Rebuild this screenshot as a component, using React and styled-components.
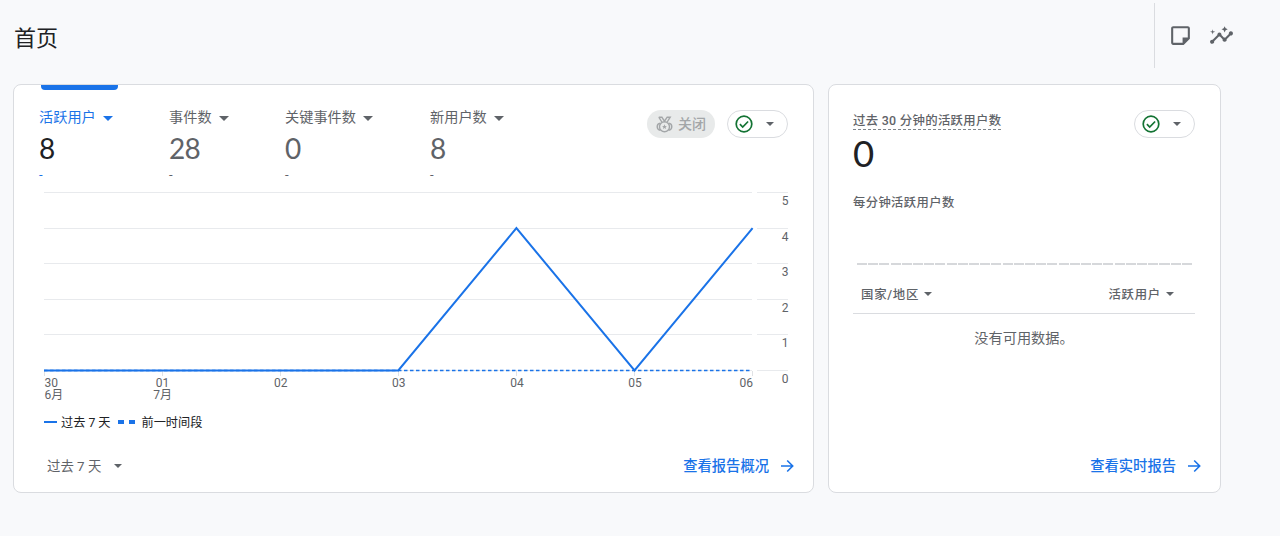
import React from "react";
import styled, { createGlobalStyle } from "styled-components";
import { MdInsights } from "react-icons/md";

const GlobalStyle = createGlobalStyle`
  * { box-sizing: border-box; }
  body {
    margin: 0;
    background: #f8f9fb;
    font-family: Roboto, "Noto Sans CJK SC", sans-serif;
    color: #5f6368;
  }
  svg { display: block; flex: none; }
`;

const Page = styled.div`
  width: 1280px;
  height: 536px;
  overflow: hidden;
  padding: 3px 59px 0 13px;
`;

const Header = styled.header`
  display: flex;
  height: 81px;
  justify-content: space-between;
`;

const Title = styled.h1`
  margin: 0;
  padding-left: 1px;
  font-size: 22px;
  font-weight: 400;
  line-height: 72px;
  color: #202124;
`;

const Tools = styled.div`
  display: flex;
  align-items: center;
  gap: 16px;
  width: 67px;
  height: 65px;
  padding-left: 12.5px;
  border-left: 1px solid #dadce0;
`;

const Cards = styled.main`
  display: flex;
  gap: 14px;
`;

const Card = styled.section`
  display: flex;
  flex-direction: column;
  flex: none;
  width: ${(p) => p.$width}px;
  height: 409px;
  padding: 0 25px 0 ${(p) => p.$left}px;
  background: #fff;
  border: 1px solid #dadce0;
  border-radius: 8px;
`;

const TabMark = styled.div`
  width: 77px;
  height: 5px;
  margin-left: 2px;
  background: #1a73e8;
  border-radius: 0 0 4px 4px;
`;

const Top = styled.div`
  display: flex;
  height: 95px;
  padding-top: 20px;
`;

const Metric = styled.div`
  width: ${(p) => p.$width}px;
  color: ${(p) => (p.$active ? "#1a73e8" : "#5f6368")};
`;

const MetricLabel = styled.div`
  display: flex;
  align-items: center;
  gap: 7px;
  height: 16px;
  font-size: 14.2px;
  line-height: 16px;
  white-space: nowrap;
`;

const LabelText = styled.span`
  padding-bottom: ${(p) => p.$lift || 2}px;
`;

const Caret = styled.i`
  border: ${(p) => p.$size || 5}px solid transparent;
  border-top-color: ${(p) => p.$color || "currentColor"};
  border-bottom: 0;
`;

const MetricValue = styled.div`
  font-family: Lato, sans-serif;
  font-size: 28px;
  line-height: 44px;
  letter-spacing: -0.7px;
  color: ${(p) => (p.$active ? "#202124" : "#5f6368")};
`;

const Delta = styled.div`
  padding-top: 1px;
  font-size: 13px;
  line-height: 8px;
`;

const Pills = styled.div`
  display: flex;
  gap: 12px;
  margin-left: auto;
`;

const OffPill = styled.div`
  display: flex;
  align-items: center;
  gap: 5px;
  width: 68px;
  height: 28px;
  padding-left: 9px;
  border-radius: 14px;
  background: #e8eaea;
  color: #a3a6a8;
  font-size: 14px;
  font-weight: 500;
`;

const StatusPill = styled.div`
  display: flex;
  align-items: center;
  gap: 13px;
  width: 61px;
  height: 28px;
  padding-left: 7px;
  border: 1px solid #dadce0;
  border-radius: 14px;
`;

const Legend = styled.div`
  display: flex;
  align-items: center;
  height: 16px;
  margin-top: 9px;
  padding-left: 5px;
  font-size: 12.2px;
  color: #202124;
`;

const Key = styled.i`
  width: ${(p) => p.$width}px;
  height: ${(p) => p.$height}px;
  margin: 0 ${(p) => p.$after}px 0 ${(p) => p.$before || 0}px;
  background: #1a73e8;
`;

const Footer = styled.div`
  display: flex;
  align-items: center;
  height: 24px;
  margin-top: auto;
  margin-bottom: 14px;
`;

const Range = styled.div`
  display: flex;
  align-items: center;
  gap: 13px;
  padding-left: 8px;
  font-size: 13.4px;
`;

const ReportLink = styled.a`
  display: flex;
  align-items: center;
  gap: 10.5px;
  margin-left: auto;
  margin-right: -5.5px;
  font-size: 14.3px;
  font-weight: 500;
  color: #1a73e8;
`;

const LiveHead = styled.div`
  display: flex;
  justify-content: space-between;
  height: 85px;
  margin-top: 25px;
`;

const LiveTitle = styled.div`
  height: 20px;
  border-bottom: 1px dashed #80868b;
  font-size: 12.4px;
  font-weight: 500;
  line-height: 22px;
  letter-spacing: 0.3px;
`;

const LiveValue = styled.div`
  font-family: Lato, sans-serif;
  font-size: 36.5px;
  line-height: 46px;
  color: #202124;
`;

const SmallTitle = styled.div`
  height: 16px;
  font-size: 12.3px;
  font-weight: 500;
  line-height: 17px;
  letter-spacing: 0.4px;
`;

const Minutes = styled.div`
  display: flex;
  gap: 1.2px;
  height: 64px;
  padding: 0 3px 10px 4px;
  align-items: flex-end;
`;

const Minute = styled.i`
  flex: 1;
  height: 2px;
  background: #d6d8db;
`;

const TableHead = styled.div`
  display: flex;
  align-items: center;
  justify-content: space-between;
  height: 39px;
  padding: 0 21px 0 8px;
  border-bottom: 1px solid #dadce0;
  font-size: 12.4px;
  font-weight: 500;
  letter-spacing: 0.75px;
`;

const Sort = styled.div`
  display: flex;
  align-items: center;
  gap: 5px;
`;

const Empty = styled.div`
  padding-top: 13px;
  text-align: center;
  font-size: 14.2px;
  line-height: 22px;
`;

const metrics = [
  { label: "活跃用户", value: 8, width: 130, active: true },
  { label: "事件数", value: 28, width: 116 },
  { label: "关键事件数", value: 0, width: 145 },
  { label: "新用户数", value: 8, width: 110 },
];

const days = [
  { day: "30", month: "6月", users: 0 },
  { day: "01", month: "7月", users: 0 },
  { day: "02", users: 0 },
  { day: "03", users: 0 },
  { day: "04", users: 4 },
  { day: "05", users: 0 },
  { day: "06", users: 4 },
];

function NoteIcon() {
  return (
    <svg width="25" height="25" viewBox="0 0 24 24" fill="#5f6368">
      <path d="M19 5v9h-5v5H5V5h14m0-2H5c-1.1 0-2 .9-2 2v14c0 1.1.9 2 2 2h10l6-6V5c0-1.1-.9-2-2-2z" />
    </svg>
  );
}

function MedalIcon() {
  return (
    <svg width="17" height="17" viewBox="0 0 17 17" fill="none" stroke="currentColor" strokeWidth="1.4">
      <path d="M2.8 1.2h3l2.7 4 2.7-4h3L11.2 6M2.8 1.2 5.8 6M5.8 1.2 8.5 5.2" />
      <circle cx="8.5" cy="10.7" r="5" />
      <path d="M4.2 7.3C2 7.5 1.2 9 1.2 10.7s1 3.2 3.2 3.6M12.8 7.3c2.2.2 3 1.7 3 3.4s-1 3.2-3.2 3.6" />
      <path d="m8.5 8.2.7 1.7 1.8.1-1.4 1.1.5 1.8-1.6-1-1.6 1 .5-1.8L6 10l1.8-.1z" fill="currentColor" stroke="none" />
    </svg>
  );
}

function Status() {
  return (
    <StatusPill>
      <svg width="18" height="18" viewBox="0 0 18 18" fill="none" stroke="#137333" strokeWidth="1.7">
        <circle cx="9" cy="9" r="7.8" />
        <path d="m4.9 9.2 2.8 2.8 5.4-5.5" />
      </svg>
      <Caret $size={4.5} $color="#5f6368" />
    </StatusPill>
  );
}

function Arrow() {
  return (
    <svg width="14" height="14" viewBox="0 0 14 14" fill="none" stroke="currentColor" strokeWidth="1.6">
      <path d="M1 7h11.5M7.2 1.5 12.7 7l-5.5 5.5" />
    </svg>
  );
}

function Chart() {
  const x = (i) => 5 + i * 118.1;
  const y = (v) => 185.5 - v * 35.6;
  const points = days.map((d, i) => `${x(i)},${y(d.users)}`).join(" ");
  return (
    <svg width="760" height="220" fontSize="12" fill="#5f6368">
      {[0, 1, 2, 3, 4, 5].map((v) => (
        <g key={v}>
          <path
            d={`M5 ${Math.floor(y(v)) + 0.5}H713M718 ${Math.floor(y(v)) + 0.5}H749`}
            stroke="#e8eaed"
          />
          <text x="749.5" y={y(v) + 12.4} textAnchor="end">{v}</text>
        </g>
      ))}
      {days.map((d, i) => {
        const anchor = i === 0 ? "start" : i === 6 ? "end" : "middle";
        return (
          <g key={d.day} textAnchor={anchor}>
            <path d={`M${Math.floor(x(i)) + 0.5} 186v5`} stroke="#e0e2e5" />
            <text x={x(i) + 0.5} y="201.5">{d.day}</text>
            <text x={x(i) + 0.5} y="213.5">{d.month}</text>
          </g>
        );
      })}
      <path d="M5 185.5H713" stroke="#1a73e8" strokeWidth="1.4" strokeDasharray="3.5 2.5" />
      <polyline points={points} fill="none" stroke="#1a73e8" strokeWidth="2" />
    </svg>
  );
}

function App() {
  return (
    <Page>
      <GlobalStyle />
      <Header>
        <Title>首页</Title>
        <Tools>
          <NoteIcon />
          <MdInsights size={25} color="#5f6368" />
        </Tools>
      </Header>
      <Cards>
        <Card $width={801} $left={25}>
          <TabMark />
          <Top>
            {metrics.map((m) => (
              <Metric key={m.label} $width={m.width} $active={m.active}>
                <MetricLabel>
                  <LabelText>{m.label}</LabelText>
                  <Caret />
                </MetricLabel>
                <MetricValue $active={m.active}>{m.value}</MetricValue>
                <Delta>-</Delta>
              </Metric>
            ))}
            <Pills>
              <OffPill>
                <MedalIcon />
                <LabelText>关闭</LabelText>
              </OffPill>
              <Status />
            </Pills>
          </Top>
          <Chart />
          <Legend>
            <Key $width={13} $height={2} $after={4} />
            过去 7 天
            <Key $width={6} $height={4} $before={8} $after={5} />
            <Key $width={6} $height={4} $after={6} />
            前一时间段
          </Legend>
          <Footer>
            <Range>
              <LabelText>过去 7 天</LabelText>
              <Caret $size={4} />
            </Range>
            <ReportLink>
              <LabelText $lift={3}>查看报告概况</LabelText>
              <Arrow />
            </ReportLink>
          </Footer>
        </Card>
        <Card $width={393} $left={24}>
          <LiveHead>
            <div>
              <LiveTitle>过去 30 分钟的活跃用户数</LiveTitle>
              <LiveValue>0</LiveValue>
            </div>
            <Status />
          </LiveHead>
          <SmallTitle>每分钟活跃用户数</SmallTitle>
          <Minutes>
            {Array.from({ length: 30 }, (_, i) => (
              <Minute key={i} />
            ))}
          </Minutes>
          <TableHead>
            <Sort>
              国家/地区
              <Caret $size={4} />
            </Sort>
            <Sort>
              活跃用户
              <Caret $size={4} />
            </Sort>
          </TableHead>
          <Empty>没有可用数据。</Empty>
          <Footer>
            <ReportLink>
              <LabelText $lift={3}>查看实时报告</LabelText>
              <Arrow />
            </ReportLink>
          </Footer>
        </Card>
      </Cards>
    </Page>
  );
}

export default App;
